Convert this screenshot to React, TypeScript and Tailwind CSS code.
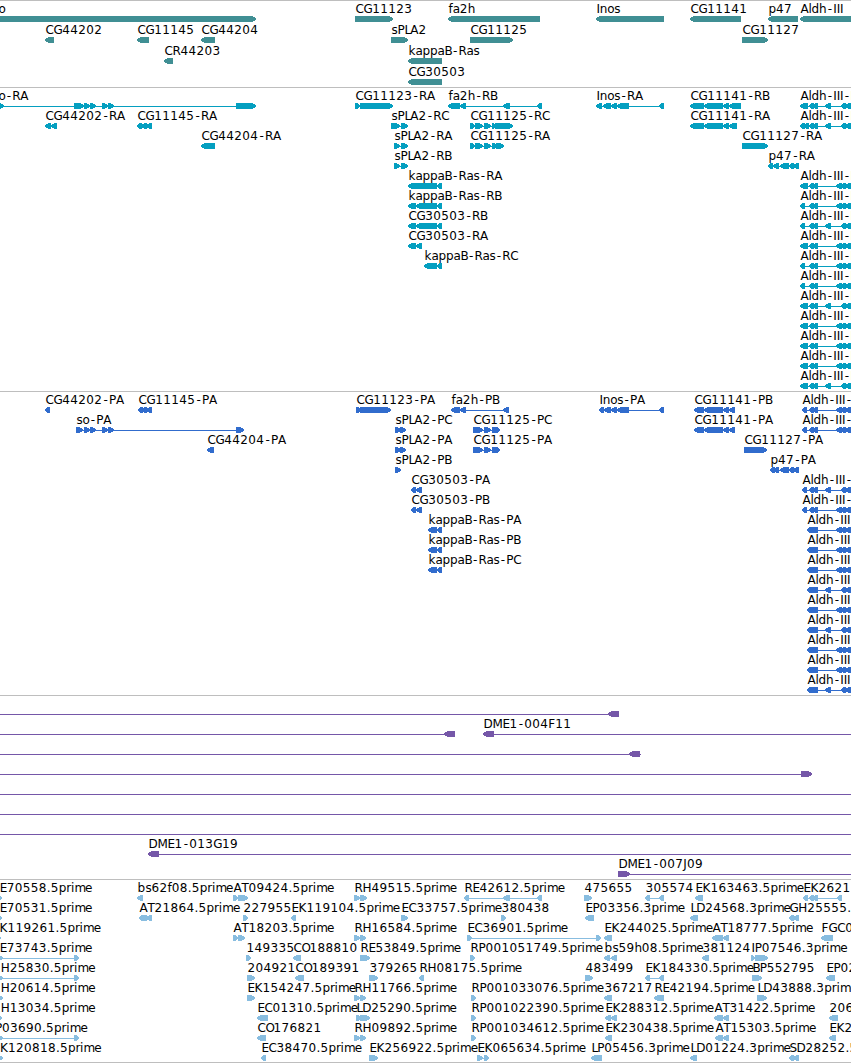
type Dir = 'l' | 'r' | '-'
type Span = [number, number]

// [row, label, x, direction, blocks, line (from, to)]
type Feature = [number, string, number, Dir, Span[], Span?]

interface TrackProps {
  height: number
  pitch: number
  color: string
  features: Feature[]
}

const ADVANCE: Record<string, number> = {
  A: 8.2, B: 7.3, C: 8, D: 9, E: 7, F: 7, G: 8.8, H: 9, I: 3.4, J: 3.7, K: 8, L: 5.8, M: 10, P: 7, R: 8, S: 7, T: 7,
  a: 7, b: 8, d: 7.5, e: 7, f: 4.3, h: 7.4, i: 3.5, k: 7, l: 3, m: 10.7, n: 7.4, o: 7, p: 7.5, r: 4.7, s: 6,
  '-': 6.8, '.': 4,
}

const glyphPositions = (label: string, start: number) => {
  let x = start + 0.4
  return Array.from(label)
    .map((ch) => {
      // centre the dash in its wide cell
      const at = ch === '-' ? x + 1.3 : x
      x += ADVANCE[ch] ?? 8
      return at.toFixed(1)
    })
    .join(' ')
}

const arrow = ([a, b]: Span, dir: Dir, top: number) => {
  const head = Math.min(5, b - a - 1.5)
  const sign = dir === 'l' ? 1 : -1
  const tip = dir === 'l' ? a : b
  const tail = dir === 'l' ? b : a
  const bottom = top + 6
  return [
    [tip, top + 2.2],
    [tip + sign * head * 0.5, top + 0.8],
    [tip + sign * head, top],
    [tail, top],
    [tail, bottom],
    [tip + sign * head, bottom],
    [tip + sign * head * 0.5, bottom - 0.8],
    [tip, top + 3.8],
  ]
    .map((p) => p.join(','))
    .join(' ')
}

function Track({ height, pitch, color, features }: TrackProps) {
  return (
    <section className="border-t border-[#bebebe]">
      <svg width={851} height={height} className="block overflow-hidden">
        {features.map(([row, label, x, dir, blocks, line], idx) => {
          // the border takes the first pixel of the track
          const y = row * pitch
          return (
            <g key={idx}>
              {line && <rect x={line[0]} y={y + 18} width={line[1] - line[0]} height={1} fill={color} />}
              {blocks.map((block) => (
                <polygon
                  key={block[0]}
                  points={arrow(block, dir, y + 15)}
                  fill={color}
                  shapeRendering="crispEdges"
                />
              ))}
              {label && (
                <text x={glyphPositions(label, x)} y={y + 12} className="font-['DejaVu_Sans',sans-serif] text-[12px]">
                  {label}
                </text>
              )}
            </g>
          )
        })}
      </svg>
    </section>
  )
}

const genes: Feature[] = [
  [0, 'so', -8, 'r', [[-8, 256]]],
  [1, 'CG44202', 45, 'l', [[45, 54]]],
  [1, 'CG11145', 137, 'l', [[137, 149]]],
  [1, 'CG44204', 201, 'l', [[201, 215]]],
  [2, 'CR44203', 164, 'l', [[164, 173]]],
  [0, 'CG11123', 355, 'r', [[355, 393]]],
  [0, 'fa2h', 448, 'l', [[448, 540]]],
  [1, 'sPLA2', 391, 'r', [[391, 408]]],
  [1, 'CG11125', 470, 'r', [[470, 513]]],
  [2, 'kappaB-Ras', 408, 'l', [[408, 442]]],
  [3, 'CG30503', 408, 'l', [[408, 442]]],
  [0, 'Inos', 596, 'l', [[596, 664]]],
  [0, 'CG11141', 690, 'l', [[690, 741]]],
  [1, 'CG11127', 742, 'r', [[742, 768]]],
  [0, 'p47', 768, 'l', [[768, 798]]],
  [0, 'Aldh-III', 800, 'l', [[800, 860]]],
]

const PAIR: Span[] = [[809, 814], [813, 818]]
const TAIL: Span[] = [[841, 846], [845, 851]]
const LONG_TAIL: Span[] = [[836, 842], ...TAIL]
const MID_TAIL: Span[] = [[825, 831], ...TAIL]

const aldh = (row: number, label: string, x: number, blocks: Span[]): Feature => [row, label, x, 'l', blocks, [x, 851]]

const transcripts: Feature[] = [
  [0, 'so-RA', -8, 'r', [[-8, 4], [74, 84], [84, 90], [90, 96], [102, 108], [108, 114], [236, 256]], [-8, 256]],
  [0, 'CG11123-RA', 355, 'r', [[355, 360], [360, 393]], [355, 393]],
  [0, 'fa2h-RB', 448, 'l', [[448, 460], [460, 466], [503, 510], [537, 542]], [448, 542]],
  [0, 'Inos-RA', 596, 'l', [[596, 602], [603, 611], [611, 617], [617, 629], [659, 664]], [596, 664]],
  [0, 'CG11141-RB', 690, 'l', [[690, 704], [704, 723], [723, 729], [729, 741]], [690, 741]],
  [1, 'CG44202-RA', 45, 'l', [[45, 51], [51, 57]], [45, 57]],
  [1, 'CG11145-RA', 137, 'l', [[137, 142], [141, 147], [146, 152]], [137, 152]],
  [1, 'sPLA2-RC', 391, 'r', [[391, 400], [401, 408]], [391, 408]],
  [1, 'CG11125-RC', 470, 'r', [[470, 475], [475, 483], [484, 491], [492, 496], [495, 513]], [470, 513]],
  [1, 'CG11141-RA', 690, 'l', [[690, 704], [704, 723], [723, 729], [729, 737]], [690, 737]],
  [2, 'CG44204-RA', 201, 'l', [[201, 215]]],
  [2, 'sPLA2-RA', 394, 'r', [[394, 400], [401, 408]], [394, 408]],
  [2, 'CG11125-RA', 470, 'r', [[470, 475], [475, 483], [484, 491], [492, 497], [496, 504]], [470, 504]],
  [2, 'CG11127-RA', 742, 'r', [[742, 768]]],
  [3, 'sPLA2-RB', 394, 'r', [[394, 400], [401, 408]], [394, 408]],
  [3, 'p47-RA', 768, 'l', [[768, 773], [773, 779], [780, 789], [789, 794], [793, 799]], [768, 799]],
  [4, 'kappaB-Ras-RA', 408, 'l', [[408, 437], [437, 442]], [408, 442]],
  [5, 'kappaB-Ras-RB', 408, 'l', [[408, 416], [416, 437], [437, 442]], [408, 442]],
  [6, 'CG30503-RB', 408, 'l', [[408, 416], [416, 437], [437, 442]], [408, 442]],
  [7, 'CG30503-RA', 408, 'l', [[408, 416], [416, 422]], [408, 422]],
  [8, 'kappaB-Ras-RC', 424, 'l', [[424, 437], [437, 442]], [424, 442]],
  aldh(0, 'Aldh-III-RA', 800, [[800, 808], ...PAIR, ...MID_TAIL]),
  aldh(1, 'Aldh-III-RB', 800, [[800, 805], [804, 809], ...PAIR, ...MID_TAIL]),
  aldh(4, 'Aldh-III-RC', 800, [[800, 808], ...PAIR, ...LONG_TAIL]),
  aldh(5, 'Aldh-III-RD', 800, [[800, 805], ...PAIR, ...LONG_TAIL]),
  aldh(6, 'Aldh-III-RE', 800, [[800, 805], ...PAIR, ...MID_TAIL]),
  aldh(7, 'Aldh-III-RF', 800, [[800, 808], ...PAIR, ...LONG_TAIL]),
  aldh(8, 'Aldh-III-RG', 800, [[800, 805], ...PAIR, ...LONG_TAIL]),
  aldh(9, 'Aldh-III-RH', 800, [[800, 805], ...PAIR, ...LONG_TAIL]),
  aldh(10, 'Aldh-III-RI', 800, [[800, 808], ...PAIR, ...MID_TAIL]),
  aldh(11, 'Aldh-III-RJ', 800, [[800, 808], ...PAIR, ...LONG_TAIL]),
  aldh(12, 'Aldh-III-RK', 800, [[800, 808], ...PAIR, ...LONG_TAIL]),
  aldh(13, 'Aldh-III-RL', 800, [[800, 808], ...PAIR, ...LONG_TAIL]),
  aldh(14, 'Aldh-III-RM', 800, [[800, 808], ...PAIR, ...MID_TAIL]),
]

const TRIPLE: Span[] = [[807, 812], [810, 815], [813, 818]]

const proteins: Feature[] = [
  [0, 'CG44202-PA', 45, 'l', [[45, 50]]],
  [0, 'CG11145-PA', 138, 'l', [[138, 143], [142, 147], [146, 152]], [138, 152]],
  [0, 'CG11123-PA', 356, 'r', [[356, 361], [360, 391]], [356, 391]],
  [0, 'fa2h-PB', 451, 'l', [[451, 460], [460, 466], [503, 509]], [451, 509]],
  [0, 'Inos-PA', 599, 'l', [[599, 604], [604, 611], [611, 617], [617, 629], [659, 664]], [599, 664]],
  [0, 'CG11141-PB', 694, 'l', [[694, 704], [704, 723], [723, 729], [729, 735]], [694, 735]],
  [1, 'so-PA', 76, 'r', [[76, 83], [84, 90], [90, 96], [102, 108], [108, 114], [236, 244]], [76, 244]],
  [1, 'sPLA2-PC', 395, 'r', [[395, 401], [400, 406]], [395, 406]],
  [1, 'CG11125-PC', 473, 'r', [[473, 483], [484, 491], [492, 497], [495, 500]], [473, 500]],
  [1, 'CG11141-PA', 694, 'l', [[694, 704], [704, 723], [723, 729], [729, 735]], [694, 735]],
  [2, 'CG44204-PA', 207, 'l', [[207, 214]]],
  [2, 'sPLA2-PA', 395, 'r', [[395, 401], [400, 406]], [395, 406]],
  [2, 'CG11125-PA', 473, 'r', [[473, 483], [484, 491], [492, 497], [495, 500]], [473, 500]],
  [2, 'CG11127-PA', 744, 'r', [[744, 767]]],
  [3, 'sPLA2-PB', 395, 'r', [[395, 401]]],
  [3, 'p47-PA', 770, 'l', [[770, 775], [774, 779], [780, 789], [789, 794], [793, 799]], [770, 799]],
  [4, 'CG30503-PA', 411, 'l', [[411, 416], [416, 422]], [411, 422]],
  [5, 'CG30503-PB', 411, 'l', [[411, 416], [416, 422]], [411, 422]],
  [6, 'kappaB-Ras-PA', 428, 'l', [[428, 437], [437, 442]], [428, 442]],
  [7, 'kappaB-Ras-PB', 428, 'l', [[428, 437], [437, 442]], [428, 442]],
  [8, 'kappaB-Ras-PC', 428, 'l', [[428, 437], [437, 442]], [428, 442]],
  aldh(0, 'Aldh-III-PA', 802, [[802, 807], ...PAIR, ...LONG_TAIL]),
  aldh(1, 'Aldh-III-PB', 802, [[802, 807], ...PAIR, ...LONG_TAIL]),
  aldh(4, 'Aldh-III-PC', 802, [[802, 807], ...PAIR, ...MID_TAIL]),
  aldh(5, 'Aldh-III-PD', 802, [[802, 807], ...PAIR, ...LONG_TAIL]),
  aldh(6, 'Aldh-III-PE', 807, [...TRIPLE, ...LONG_TAIL]),
  aldh(7, 'Aldh-III-PF', 807, [...TRIPLE, ...LONG_TAIL]),
  aldh(8, 'Aldh-III-PG', 807, [...TRIPLE, ...LONG_TAIL]),
  aldh(9, 'Aldh-III-PH', 807, [...TRIPLE, ...MID_TAIL]),
  aldh(10, 'Aldh-III-PI', 807, [...TRIPLE, ...LONG_TAIL]),
  aldh(11, 'Aldh-III-PJ', 807, [...TRIPLE, ...MID_TAIL]),
  aldh(12, 'Aldh-III-PK', 807, [...TRIPLE, ...LONG_TAIL]),
  aldh(13, 'Aldh-III-PL', 807, [...TRIPLE, ...LONG_TAIL]),
  aldh(14, 'Aldh-III-PM', 807, [...TRIPLE, ...MID_TAIL]),
]

const clones: Feature[] = [
  [0, '', 0, 'l', [[608, 619]], [0, 619]],
  [1, '', 0, 'l', [[444, 455]], [0, 455]],
  [1, 'DME1-004F11', 483, 'l', [[483, 494]], [483, 851]],
  [2, '', 0, 'l', [[629, 640]], [0, 641]],
  [3, '', 0, 'r', [[801, 812]], [0, 812]],
  [4, '', 0, '-', [], [0, 851]],
  [5, '', 0, '-', [], [0, 851]],
  [6, '', 0, '-', [], [0, 851]],
  [7, 'DME1-013G19', 148, 'l', [[148, 159]], [148, 851]],
  [8, 'DME1-007J09', 618, 'r', [[618, 630]], [618, 851]],
]

const ests: Feature[] = [
  [0, 'E70558.5prime', -0.7, 'r', [[-4, 2]]],
  [1, 'E70531.5prime', -0.7, 'r', [[-4, 2]]],
  [2, 'K119261.5prime', -1, 'r', [[-4, 1]]],
  [3, 'E73743.5prime', -0.7, 'r', [[-4, 3], [74, 79]], [0, 79]],
  [4, 'H25830.5prime', 0.4, 'r', [[-4, 3], [74, 79]], [0, 79]],
  [5, 'H20614.5prime', 0.4, 'r', [[-4, 3]]],
  [6, 'H13034.5prime', 0.4, 'r', [[-4, 2]]],
  [7, 'P03690.5prime', -5.4, 'r', [[-4, 3], [74, 79]], [0, 79]],
  [8, 'K120818.5prime', -0.5, 'r', [[-4, 3]]],

  [0, 'bs62f08.5prime', 137, 'l', [[137, 143]]],
  [0, 'AT09424.5prime', 233, 'r', [[233, 238], [238, 248]], [233, 248]],
  [0, 'RH49515.5prime', 354, 'r', [[354, 360], [360, 367]], [354, 367]],
  [0, 'RE42612.5prime', 464, 'l', [[464, 469], [503, 510], [537, 542]], [464, 542]],
  [0, '475655', 584, 'r', [[584, 592]]],
  [0, '305574', 645, 'l', [[645, 650], [659, 664]], [645, 664]],
  [0, 'EK163463.5prime', 695, 'l', [[695, 703]]],
  [0, 'EK2621', 803, 'l', [[803, 808], ...PAIR, [837, 842]], [803, 842]],

  [1, 'AT21864.5prime', 139, 'l', [[139, 144], [142, 147], [146, 152]], [139, 152]],
  [1, '227955', 243, 'r', [[243, 248]]],
  [1, 'EK119104.5prime', 291, 'l', [[291, 296]]],
  [1, 'EC33757.5prime', 401, 'r', [[401, 408]]],
  [1, '380438', 501, 'r', [[501, 506]]],
  [1, 'EP03356.3prime', 585, 'l', [[585, 594]]],
  [1, 'LD24568.3prime', 690, 'l', [[690, 698]]],
  [1, 'GH25555.', 789, 'l', [[789, 794], [793, 799]]],

  [2, 'AT18203.5prime', 233, 'r', [[233, 238], [238, 245]], [233, 245]],
  [2, 'RH16584.5prime', 354, 'r', [[354, 360], [360, 366]], [354, 366]],
  [2, 'EC36901.5prime', 467, 'r', [[467, 472], [596, 601]], [467, 601]],
  [2, 'EK244025.5prime', 604, 'l', [[604, 612]]],
  [2, 'AT18777.5prime', 712, 'l', [[712, 723], [723, 729]], [712, 729]],
  [2, 'FGC0', 821, 'l', [[821, 833]]],

  [3, '149335', 246, 'r', [[246, 251]]],
  [3, 'CO188810', 293, 'l', [[293, 301]]],
  [3, 'RE53849.5prime', 360, 'r', [[360, 370]]],
  [3, 'RP001051749.5prime', 470, 'r', [[470, 475]]],
  [3, 'bs59h08.5prime', 604, 'l', [[604, 610], [611, 617]], [604, 617]],
  [3, '381124', 702, 'l', [[702, 709]]],
  [3, 'IP07546.3prime', 751, 'r', [[751, 755], [755, 768]], [751, 768]],

  [4, '204921', 247, 'r', [[247, 255]]],
  [4, 'CO189391', 295, 'l', [[295, 304]]],
  [4, '379265', 369, 'r', [[369, 378]]],
  [4, 'RH08175.5prime', 419, 'l', [[419, 424]]],
  [4, '483499', 585, 'r', [[585, 593]]],
  [4, 'EK184330.5prime', 645, 'l', [[645, 650], [659, 664]], [645, 664]],
  [4, 'BP552795', 752, 'r', [[752, 762]]],
  [4, 'EP02', 826, 'l', [[826, 835]]],

  [5, 'EK154247.5prime', 247, 'r', [[247, 255]]],
  [5, 'RH11766.5prime', 354, 'r', [[354, 360], [360, 366]], [354, 366]],
  [5, 'RP001033076.5prime', 471, 'r', [[471, 476]]],
  [5, '367217', 604, 'l', [[604, 612]]],
  [5, 'RE42194.5prime', 654, 'l', [[654, 664]]],
  [5, 'LD43888.3prime', 757, 'r', [[757, 767]]],

  [6, 'EC01310.5prime', 257, 'l', [[257, 268]]],
  [6, 'LD25290.5prime', 356, 'r', [[356, 361], [360, 370]], [356, 370]],
  [6, 'RP001022390.5prime', 471, 'r', [[471, 476]]],
  [6, 'EK288312.5prime', 605, 'l', [[605, 611], [611, 617]], [605, 617]],
  [6, 'AT31422.5prime', 714, 'l', [[714, 723], [723, 729]], [714, 729]],
  [6, '206', 829, 'l', [[829, 838]]],

  [7, 'CO176821', 257, 'l', [[257, 266]]],
  [7, 'RH09892.5prime', 354, 'r', [[354, 360], [360, 366]], [354, 366]],
  [7, 'RP001034612.5prime', 471, 'r', [[471, 476]]],
  [7, 'EK230438.5prime', 605, 'l', [[605, 612]]],
  [7, 'AT15303.5prime', 715, 'l', [[715, 723], [723, 729]], [715, 729]],
  [7, 'EK2', 829, 'l', [[829, 836]]],

  [8, 'EC38470.5prime', 261, 'l', [[261, 266]]],
  [8, 'EK256922.5prime', 369, 'r', [[369, 378]]],
  [8, 'EK065634.5prime', 477, 'r', [[477, 483], [484, 489]], [477, 489]],
  [8, 'LP05456.3prime', 591, 'l', [[591, 602]]],
  [8, 'LD01224.3prime', 690, 'l', [[690, 697]]],
  [8, 'SD28252.5', 789, 'l', [[789, 794], [793, 799]], [789, 799]],
]

export default function App() {
  return (
    <main className="flex h-[1063px] w-[851px] flex-col overflow-hidden border-b border-[#bebebe] bg-white text-black">
      <Track height={86} pitch={21} color="#408f94" features={genes} />
      <Track height={303} pitch={20} color="#049fc0" features={transcripts} />
      <Track height={303} pitch={20} color="#316ccd" features={proteins} />
      <Track height={183} pitch={20} color="#7557a8" features={clones} />
      <Track height={182} pitch={20} color="#88bde0" features={ests} />
    </main>
  )
}
